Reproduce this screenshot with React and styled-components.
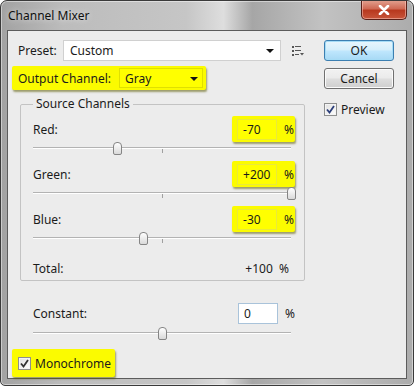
import React from 'react';
import styled, { createGlobalStyle } from 'styled-components';

const Global = createGlobalStyle`
  html, body { margin: 0; padding: 0; background: #ffffff; }
  body { font-family: "Noto Sans", "Open Sans", sans-serif; font-size: 12px; color: #1b1b1b; }
  * { box-sizing: border-box; }
`;

const Window = styled.div`
  width: 414px;
  height: 386px;
  border: 1px solid #3a3a3a;
  border-radius: 7px 7px 5px 5px;
  background: linear-gradient(to right, #a2a2a2 0%, #bcbcbc 15%, #c6c6c6 45%, #dedede 54%, #a6a6a6 61%, #c2c2c2 78%, #acacac 100%);
  box-shadow: inset 0 0 0 1px rgba(255, 255, 255, 0.45);
  display: flex;
  flex-direction: column;
  overflow: hidden;
`;

const TitleBar = styled.div`
  height: 29px;
  display: flex;
  justify-content: space-between;
  align-items: flex-start;
  padding: 0 6px 0 7px;
`;

const Title = styled.div`
  padding-top: 6px;
  font-size: 12px;
  color: #101010;
  text-shadow: 0 0 6px rgba(255, 255, 255, 0.8);
`;

const CloseButton = styled.div`
  width: 46px;
  height: 20px;
  margin-top: -1px;
  border: 1px solid #5a2018;
  border-top: none;
  border-radius: 0 0 5px 5px;
  background: linear-gradient(to bottom, #e3a392 0%, #cf6a55 45%, #b8391f 55%, #c8553a 100%);
  box-shadow: inset 0 0 0 1px rgba(255, 210, 200, 0.5);
  display: flex;
  align-items: center;
  justify-content: center;
`;

const Client = styled.div`
  flex: 1;
  margin: 0 6px 6px 6px;
  border: 1px solid #5c5c5c;
  background: #ececec;
  display: flex;
  gap: 12px;
  padding: 9px 0 0 4px;
`;

const LeftCol = styled.div`
  width: 300px;
  display: flex;
  flex-direction: column;
`;

const RightCol = styled.div`
  width: 70px;
  display: flex;
  flex-direction: column;
`;

const Row = styled.div`
  display: flex;
  align-items: center;
  padding-left: ${(p) => p.$indent || 0}px;
  margin-top: ${(p) => p.$mt || 0}px;
  height: ${(p) => p.$h || 21}px;
`;

const Label = styled.span`
  flex: ${(p) => (p.$grow ? 1 : 'none')};
  width: ${(p) => (p.$w ? p.$w + 'px' : 'auto')};
  white-space: nowrap;
`;

const TextBox = styled.div`
  width: 218px;
  height: 21px;
  background: #ffffff;
  border: 1px solid #d0d0d0;
  display: flex;
  align-items: center;
  padding: 0 6px 0 6px;
  justify-content: space-between;
`;

const Arrow = styled.span`
  width: 0;
  height: 0;
  border-left: 4px solid transparent;
  border-right: 4px solid transparent;
  border-top: 4px solid #111;
  margin-top: 1px;
`;

const MenuIcon = styled.svg`
  margin-left: 11px;
`;

const Highlight = styled.div`
  display: flex;
  align-items: center;
  background: #fbfb00;
  border-radius: 2px;
  box-shadow: 1px 2px 2px rgba(90, 90, 0, 0.55);
  padding: ${(p) => p.$pad || '0 5px'};
  height: ${(p) => p.$h || 24}px;
  width: ${(p) => (p.$w ? p.$w + 'px' : 'auto')};
  margin-right: ${(p) => p.$mr || 0}px;
  align-self: flex-start;
`;

const YellowSelect = styled.div`
  width: 90px;
  height: 20px;
  margin-left: 8px;
  border: 1px solid #e0e000;
  background: #ffff00;
  display: flex;
  align-items: center;
  justify-content: space-between;
  padding: 0 4px 0 5px;
`;

const Fieldset = styled.fieldset`
  margin: 6px 0 0 8px;
  width: 285px;
  height: 185px;
  border: 1px solid #c3c3c3;
  border-radius: 2px;
  padding: 0 11px 0 12px;
  display: flex;
  flex-direction: column;
`;

const Legend = styled.legend`
  padding: 0 3px;
  line-height: 16px;
`;

const ChannelRow = styled.div`
  display: flex;
  align-items: center;
  justify-content: space-between;
  height: 26px;
  margin-top: ${(p) => p.$mt || 0}px;
`;

const ValueBox = styled.div`
  width: 40px;
  height: 21px;
  border: 1px solid ${(p) => (p.$white ? '#a9c3da' : '#eaea3a')};
  background: ${(p) => (p.$white ? '#ffffff' : '#ffff00')};
  display: flex;
  align-items: center;
  padding-left: 5px;
  margin-right: 7px;
`;

const SliderWrap = styled.div`
  position: relative;
  height: 14px;
  width: 258px;
  margin-top: ${(p) => p.$mt || 0}px;
`;

const Track = styled.div`
  position: absolute;
  left: 0;
  right: 0;
  top: 5px;
  height: 2px;
  border-top: 1px solid #b3b3b3;
  border-bottom: 1px solid #ffffff;
`;

const Tick = styled.div`
  position: absolute;
  left: 129px;
  top: 7px;
  width: 1px;
  height: 4px;
  background: #a0a0a0;
`;

const Thumb = styled.div`
  position: absolute;
  top: 0;
  width: 9px;
  height: 13px;
  margin-left: -4px;
  border: 1px solid #858585;
  border-radius: 4px 4px 2px 2px;
  background: linear-gradient(to bottom, #ffffff, #d9d9d9);
`;

const TotalRow = styled.div`
  display: flex;
  justify-content: space-between;
  margin-top: 14px;
  padding-right: 4px;
`;

const Button = styled.div`
  width: 70px;
  height: 21px;
  border-radius: 3px;
  border: 1px solid ${(p) => (p.$primary ? '#3c7fb1' : '#707070')};
  background: ${(p) =>
    p.$primary
      ? 'linear-gradient(to bottom, #e8f6fd 0%, #d6effb 45%, #bee6fd 55%, #a7d9f5 100%)'
      : 'linear-gradient(to bottom, #f2f2f2 0%, #ebebeb 45%, #dddddd 55%, #cfcfcf 100%)'};
  box-shadow: inset 0 0 0 1px ${(p) => (p.$primary ? '#a6dcf6' : '#fbfbfb')};
  display: flex;
  align-items: center;
  justify-content: center;
  margin-top: ${(p) => p.$mt || 0}px;
  font-size: 12px;
`;

const CheckRow = styled.div`
  display: flex;
  align-items: center;
  gap: 4px;
  margin-top: ${(p) => p.$mt || 0}px;
`;

const CheckBox = styled.div`
  width: 13px;
  height: 13px;
  border: 1px solid #8e8f8f;
  background: linear-gradient(135deg, #e0e0e0, #ffffff);
  box-shadow: inset 0 0 0 1px #f4f4f4;
  display: flex;
  align-items: center;
  justify-content: center;
`;

const Check = ({ color }) => (
  <svg width="9" height="9" viewBox="0 0 9 9">
    <path d="M1 4.5 L3.5 7.5 L8 1" fill="none" stroke={color} strokeWidth="1.8" />
  </svg>
);

const Slider = ({ value, mt }) => {
  const pct = ((value + 200) / 400) * 100;
  return (
    <SliderWrap $mt={mt}>
      <Track />
      <Tick />
      <Thumb style={{ left: `${pct}%` }} />
    </SliderWrap>
  );
};

const channels = [
  { name: 'Red:', value: -70, text: '-70' },
  { name: 'Green:', value: 200, text: '+200' },
  { name: 'Blue:', value: -30, text: '-30' },
];

export default function App() {
  return (
    <>
      <Global />
      <Window>
        <TitleBar>
          <Title>Channel Mixer</Title>
          <CloseButton>
            <svg width="12" height="10" viewBox="0 0 12 10">
              <path d="M2 1 L10 9 M10 1 L2 9" stroke="#ffffff" strokeWidth="2.6" strokeLinecap="round" />
            </svg>
          </CloseButton>
        </TitleBar>
        <Client>
          <LeftCol>
            <Row $indent={6}>
              <Label $w={45}>Preset:</Label>
              <TextBox>
                <span>Custom</span>
                <Arrow />
              </TextBox>
              <MenuIcon width="12" height="11" viewBox="0 0 12 11">
                <rect x="0" y="1" width="2" height="2" fill="#555" />
                <rect x="0" y="5" width="2" height="2" fill="#555" />
                <rect x="0" y="9" width="2" height="2" fill="#555" />
                <rect x="3" y="1" width="6" height="1" fill="#555" />
                <rect x="3" y="5" width="6" height="1" fill="#555" />
                <rect x="3" y="9" width="4" height="1" fill="#555" />
                <path d="M8 8 L12 8 L10 10.5 Z" fill="#555" />
              </MenuIcon>
            </Row>
            <Row $mt={5} $h={24}>
              <Highlight $w={194} $pad="0 3px 0 6px">
                <Label>Output Channel:</Label>
                <YellowSelect>
                  <span>Gray</span>
                  <Arrow />
                </YellowSelect>
              </Highlight>
            </Row>
            <Fieldset>
              <Legend>Source Channels</Legend>
              {channels.map((c, i) => (
                <React.Fragment key={c.name}>
                  <ChannelRow $mt={i === 0 ? 4 : 5}>
                    <Label>{c.name}</Label>
                    <Highlight $h={26} $pad="0 1px 0 5px" $mr={-2}>
                      <ValueBox>{c.text}</ValueBox>
                      <span>%</span>
                    </Highlight>
                  </ChannelRow>
                  <Slider value={c.value} mt={0} />
                </React.Fragment>
              ))}
              <TotalRow>
                <Label>Total:</Label>
                <Label>+100&nbsp; %</Label>
              </TotalRow>
            </Fieldset>
            <ChannelRow $mt={19} style={{ paddingLeft: 21, width: 283 }}>
              <Label>Constant:</Label>
              <Row $h={24}>
                <ValueBox $white>0</ValueBox>
                <span>%</span>
              </Row>
            </ChannelRow>
            <Row $h={14} $indent={21} $mt={1}>
              <Slider value={0} />
            </Row>
            <Row $mt={8} $h={28}>
              <Highlight $h={28} $pad="0 4px 0 6px">
                <CheckRow>
                  <CheckBox>
                    <Check color="#333" />
                  </CheckBox>
                  <Label>Monochrome</Label>
                </CheckRow>
              </Highlight>
            </Row>
          </LeftCol>
          <RightCol>
            <Button $primary>OK</Button>
            <Button $mt={7}>Cancel</Button>
            <CheckRow $mt={12}>
              <CheckBox>
                <Check color="#2c3f7a" />
              </CheckBox>
              <Label>Preview</Label>
            </CheckRow>
          </RightCol>
        </Client>
      </Window>
    </>
  );
}
